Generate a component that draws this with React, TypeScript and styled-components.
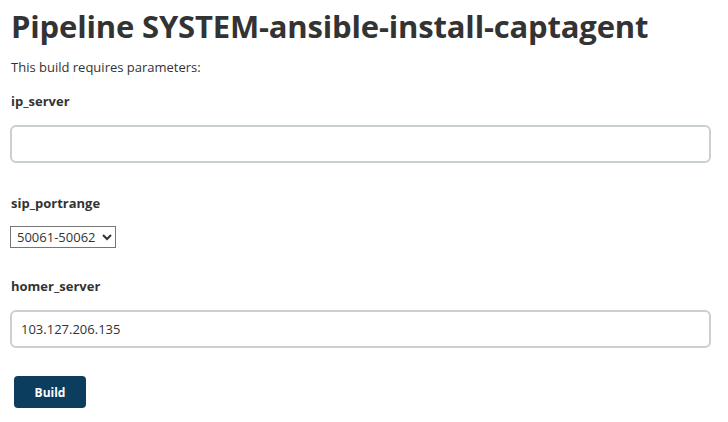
import React from 'react';
import styled, { createGlobalStyle } from 'styled-components';

const GlobalStyle = createGlobalStyle`
  html, body {
    margin: 0;
    padding: 0;
    background: #ffffff;
  }
  body {
    font-family: "Open Sans", "Noto Sans", sans-serif;
    color: #333333;
  }
`;

const Page = styled.div`
  padding: 4px 17px 0 10px;
`;

const Title = styled.h1`
  margin: 0;
  font-size: 31px;
  font-weight: 700;
  line-height: 44px;
  letter-spacing: -0.17px;
  color: #333333;
  padding-left: 1px;
`;

const Intro = styled.p`
  margin: 10px 0 0 0;
  font-size: 13px;
  line-height: 18px;
  padding-left: 1px;
`;

const Param = styled.div<{ $gap: number }>`
  display: flex;
  flex-direction: column;
  align-items: flex-start;
  margin-top: ${(p) => p.$gap}px;
`;

const Label = styled.label`
  font-size: 13px;
  font-weight: 700;
  line-height: 18px;
  padding-left: 1px;
  color: #333333;
`;

const TextInput = styled.input`
  box-sizing: border-box;
  width: 100%;
  height: 38px;
  margin-top: 15px;
  padding: 0 9px;
  border: 2px solid #c8d0d3;
  border-radius: 6px;
  font-family: inherit;
  font-size: 13px;
  color: #333333;
  background: #ffffff;
  outline: none;
`;

const Select = styled.select`
  box-sizing: border-box;
  width: 106px;
  height: 22px;
  margin-top: 14px;
  padding: 0 0 0 2px;
  border: 1px solid #767676;
  border-radius: 0;
  font-family: inherit;
  font-size: 13px;
  color: #333333;
  background: #ffffff;
`;

const BuildButton = styled.button`
  margin: 28px 0 0 4px;
  width: 72px;
  height: 32px;
  border: none;
  border-radius: 4px;
  background: #0b3d5f;
  color: #ffffff;
  font-family: inherit;
  font-size: 12px;
  font-weight: 700;
  cursor: pointer;
`;

export default function App() {
  return (
    <>
      <GlobalStyle />
      <Page>
        <Title>Pipeline SYSTEM-ansible-install-captagent</Title>
        <Intro>This build requires parameters:</Intro>
        <Param $gap={16}>
          <Label>ip_server</Label>
          <TextInput type="text" defaultValue="" />
        </Param>
        <Param $gap={31}>
          <Label>sip_portrange</Label>
          <Select defaultValue="50061-50062">
            <option>50061-50062</option>
            <option>50063-50064</option>
          </Select>
        </Param>
        <Param $gap={29}>
          <Label>homer_server</Label>
          <TextInput type="text" defaultValue="103.127.206.135" />
        </Param>
        <BuildButton>Build</BuildButton>
      </Page>
    </>
  );
}
